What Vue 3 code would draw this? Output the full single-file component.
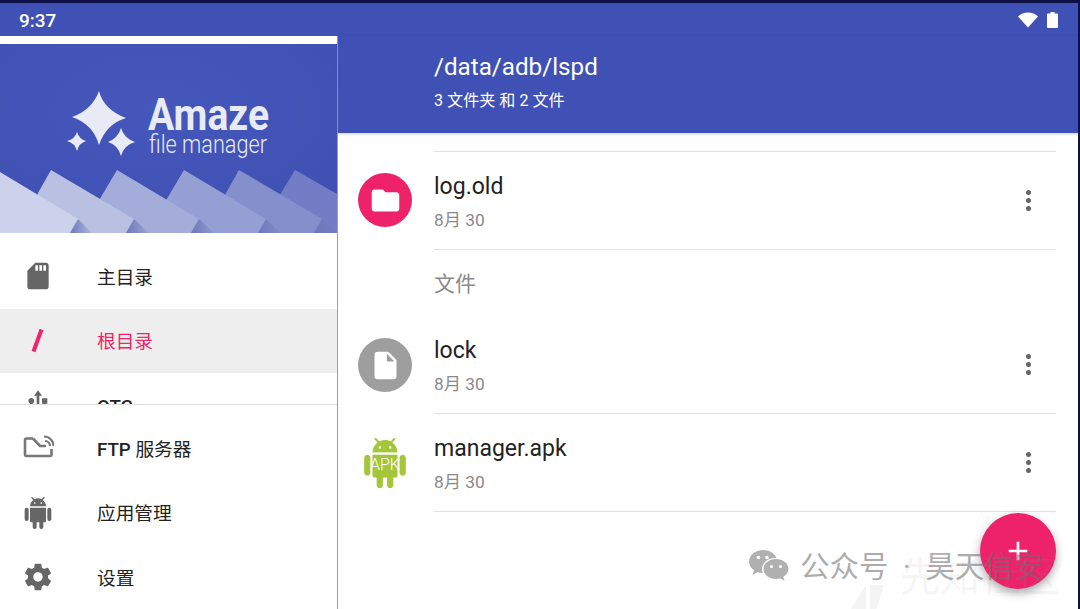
<script setup>
const sdPath = 'M18 2h-8L4.02 8 4 20c0 1.1.9 2 2 2h12c1.1 0 2-.9 2-2V4c0-1.1-.9-2-2-2zm-6 6h-2V4h2v4zm3 0h-2V4h2v4zm3 0h-2V4h2v4z'
const usbPath = 'M15 7v4h1v2h-3V5h2l-3-4-3 4h2v8H8v-2.07c.7-.37 1.2-1.08 1.2-1.93 0-1.21-.99-2.2-2.2-2.2-1.21 0-2.2.99-2.2 2.2 0 .85.5 1.56 1.2 1.93V13c0 1.11.89 2 2 2h3v3.05c-.71.37-1.2 1.1-1.2 1.95 0 1.22.99 2.2 2.2 2.2 1.21 0 2.2-.98 2.2-2.2 0-.85-.49-1.58-1.2-1.95V15h3c1.11 0 2-.89 2-2v-2h1V7h-4z'
const androidPath = 'M6 18c0 .55.45 1 1 1h1v3.5c0 .83.67 1.5 1.5 1.5s1.5-.67 1.5-1.5V19h2v3.5c0 .83.67 1.5 1.5 1.5s1.5-.67 1.5-1.5V19h1c.55 0 1-.45 1-1V8H6v10zM3.5 8C2.67 8 2 8.67 2 9.5v7c0 .83.67 1.5 1.5 1.5S5 17.33 5 16.5v-7C5 8.67 4.33 8 3.5 8zm17 0c-.83 0-1.5.67-1.5 1.5v7c0 .83.67 1.5 1.5 1.5s1.5-.67 1.5-1.5v-7c0-.83-.67-1.5-1.5-1.5zm-4.97-5.84l1.3-1.3c.2-.2.2-.51 0-.71-.2-.2-.51-.2-.71 0l-1.48 1.48C13.85 1.23 12.95 1 12 1c-.96 0-1.86.23-2.66.63L7.85.15c-.2-.2-.51-.2-.71 0-.2.2-.2.51 0 .71l1.31 1.31C6.97 3.26 6 5.01 6 7h12c0-1.99-.97-3.75-2.47-4.84zM10 5H9V4h1v1zm5 0h-1V4h1v1z'
const gearPath = 'M19.43 12.98c.04-.32.07-.64.07-.98s-.03-.66-.07-.98l2.11-1.65c.19-.15.24-.42.12-.64l-2-3.46c-.12-.22-.39-.3-.61-.22l-2.49 1c-.52-.4-1.08-.73-1.69-.98l-.38-2.65C14.46 2.18 14.25 2 14 2h-4c-.25 0-.46.18-.49.42l-.38 2.65c-.61.25-1.17.59-1.69.98l-2.49-1c-.23-.09-.49 0-.61.22l-2 3.46c-.13.22-.07.49.12.64l2.11 1.65c-.04.32-.07.65-.07.98s.03.66.07.98l-2.11 1.65c-.19.15-.24.42-.12.64l2 3.46c.12.22.39.3.61.22l2.49-1c.52.4 1.08.73 1.69.98l.38 2.65c.03.24.24.42.49.42h4c.25 0 .46-.18.49-.42l.38-2.65c.61-.25 1.17-.59 1.69-.98l2.49 1c.23.09.49 0 .61-.22l2-3.46c.12-.22.07-.49-.12-.64l-2.11-1.65zM12 15.5c-1.93 0-3.5-1.57-3.5-3.5s1.57-3.5 3.5-3.5 3.5 1.57 3.5 3.5-1.57 3.5-3.5 3.5z'
const folderPath = 'M10 4H4c-1.1 0-1.99.9-1.99 2L2 18c0 1.1.9 2 2 2h16c1.1 0 2-.9 2-2V8c0-1.1-.9-2-2-2h-8l-2-2z'
const filePath = 'M6 2c-1.1 0-1.99.9-1.99 2L4 20c0 1.1.89 2 1.99 2H18c1.1 0 2-.9 2-2V8l-6-6H6zm7 7V3.5L18.5 9H13z'

const peaks = [
  { points: '295,170 337,194 337,233 260,233 281,193', shade: '', fill: '#737dc5' },
  { points: '239,170 322,219 314,233 205,233 226,193', shade: '322,219 337,233 314,233', fill: '#858fcb' },
  { points: '184,170 266,219 258,233 145,233 168,197', shade: '266,219 281,233 258,233', fill: '#959fd3' },
  { points: '117,170 199,219 191,233 80,233 101,197', shade: '199,219 214,233 191,233', fill: '#a4acd9' },
  { points: '51,170 134,219 126,233 20,233 38,193', shade: '134,219 149,233 126,233', fill: '#b9c0e2' },
  { points: '0,172 78,219 70,233 0,233', shade: '78,219 92,233 70,233', fill: '#cdd2ec' },
]

const topMenu = [
  { label: '主目录', icon: sdPath },
  { label: '根目录', slash: true, active: true },
  { label: 'OTG', icon: usbPath, clipped: true },
]

const files = [
  { name: 'log.old', date: '8月 30', kind: 'folder' },
  { section: '文件' },
  { name: 'lock', date: '8月 30', kind: 'file' },
  { name: 'manager.apk', date: '8月 30', kind: 'apk' },
]
</script>

<template>
  <div class="screen">
    <div class="status-bar">
      <span class="clock">9:37</span>
      <div class="status-icons">
        <svg width="20" height="16" viewBox="0 0 20 16"><path d="M0 4.5C2.7 2 6.2.5 10 .5s7.300 1.500 10 4L10 15.500z" fill="#fff" /></svg>
        <svg width="11" height="16" viewBox="0 0 11 16">
          <path d="M3.500 0h4v1.500H10c.5 0 1 .4 1 1V15c0 .6-.5 1-1 1H1c-.6 0-1-.4-1-1V2.500c0-.6.4-1 1-1h2.500z" fill="#fff" />
        </svg>
      </div>
    </div>

    <div class="body">
      <aside class="drawer">
        <div class="drawer-gap"></div>
        <svg class="banner" width="337" height="189" viewBox="0 44 337 189">
          <defs>
            <radialGradient id="bannerBg" cx="45%" cy="35%" r="75%">
              <stop offset="0" stop-color="#4557bb" />
              <stop offset="1" stop-color="#3f50b2" />
            </radialGradient>
            <linearGradient id="shade" x1="0" y1="0" x2="1" y2="0">
              <stop offset="0" stop-color="#6f78ba" />
              <stop offset="1" stop-color="#6f78ba" stop-opacity="0.15" />
            </linearGradient>
          </defs>
          <rect x="0" y="44" width="337" height="189" fill="url(#bannerBg)" />
          <g v-for="peak in peaks" :key="peak.fill">
            <polygon :points="peak.points" :fill="peak.fill" />
            <polygon v-if="peak.shade" :points="peak.shade" fill="url(#shade)" />
          </g>
          <g fill="#e8eaf6">
            <path d="M99 91 Q104 110 126 118 Q106 124 99 145 Q93 124 72 117 Q92 110 99 91z" />
            <path d="M77 132 Q79 139 86 141 Q79 143 77 151 Q75 143 67 141 Q75 139 77 132z" />
            <path d="M121 128 Q124 138 135 142 Q124 145 121 156 Q118 145 108 142 Q118 138 121 128z" />
            <text x="148" y="130" class="logo-main" textLength="121" lengthAdjust="spacingAndGlyphs">Amaze</text>
            <text x="149" y="153" class="logo-sub" textLength="118" lengthAdjust="spacingAndGlyphs">file manager</text>
          </g>
        </svg>

        <nav class="menu-top">
          <div v-for="item in topMenu" :key="item.label" class="menu-row" :class="{ active: item.active }">
            <span class="menu-icon">
              <svg v-if="item.slash" width="32" height="32" viewBox="0 0 32 32">
                <path d="M19.500 4.500 L11.500 26.500" stroke="#f0246b" stroke-width="4" />
              </svg>
              <svg v-else width="32" height="32" viewBox="0 0 24 24"><path :d="item.icon" fill="#666" /></svg>
            </span>
            <span class="menu-label" :class="{ clipped: item.clipped }">{{ item.label }}</span>
          </div>
        </nav>

        <nav class="menu-bottom">
          <div class="menu-row">
            <span class="menu-icon">
              <svg width="32" height="32" viewBox="0 0 32 32" fill="none" stroke="#777">
                <path d="M11 6.500H4.500Q3 6.500 3 8V22.500Q3 24 4.500 24H28Q29.500 24 29.500 22.500V17" stroke-width="2.600" />
                <path d="M11 6.500l7 7.500H24" stroke-width="2.600" />
                <path d="M22 4.500a9.500 9.500 0 0 1 9.500 9.500M23 9a5 5 0 0 1 5 5" stroke-width="2.200" />
              </svg>
            </span>
            <span class="menu-label"><b>FTP</b> 服务器</span>
          </div>
          <div class="menu-row">
            <span class="menu-icon"><svg width="32" height="32" viewBox="0 0 24 24"><path :d="androidPath" fill="#666" /></svg></span>
            <span class="menu-label">应用管理</span>
          </div>
          <div class="menu-row">
            <span class="menu-icon"><svg width="32" height="32" viewBox="0 0 24 24"><path :d="gearPath" fill="#666" /></svg></span>
            <span class="menu-label">设置</span>
          </div>
        </nav>
      </aside>

      <main class="main">
        <header class="header">
          <div class="path">/data/adb/lspd</div>
          <div class="summary">3 文件夹 和 2 文件</div>
        </header>

        <div class="list">
          <div class="list-top"></div>
          <template v-for="row in files" :key="row.name || row.section">
            <div v-if="row.section" class="section">{{ row.section }}</div>
            <div v-else class="row">
              <div class="row-icon">
                <span v-if="row.kind === 'folder'" class="circle pink">
                  <svg width="33" height="33" viewBox="0 0 24 24"><path :d="folderPath" fill="#fff" /></svg>
                </span>
                <span v-else-if="row.kind === 'file'" class="circle grey">
                  <svg width="33" height="33" viewBox="0 0 24 24"><path :d="filePath" fill="#fff" /></svg>
                </span>
                <svg v-else width="50" height="50" viewBox="0 0 24 24">
                  <path :d="androidPath" fill="#a4c639" />
                  <rect x="6" y="7.100" width="12" height="0.500" fill="#fff" />
                  <text x="12" y="15.300" class="apk-text" text-anchor="middle">APK</text>
                </svg>
              </div>
              <div class="row-body">
                <div class="row-text">
                  <div class="row-name">{{ row.name }}</div>
                  <div class="row-date">{{ row.date }}</div>
                </div>
                <span class="more"><i></i><i></i><i></i></span>
              </div>
            </div>
          </template>
        </div>
      </main>
    </div>

    <button class="fab" type="button">
      <svg width="32" height="32" viewBox="0 0 24 24"><path d="M19 13h-6v6h-2v-6H5v-2h6V5h2v6h6v2z" fill="#fff" /></svg>
    </button>

    <div class="mark-faint">
      <svg width="44" height="36" viewBox="0 0 44 36"><path d="M4 36L24 4v32zM28 4h14L32 36h-4z" fill="#f4f4f4" /></svg>
      <span>先知社区</span>
    </div>

    <div class="mark">
      <svg width="40" height="36" viewBox="0 0 40 36" fill="#b0b0b0">
        <path d="M14 1C6.500 1 0 6 0 12.500c0 3.600 2 6.600 5 8.800L3.500 26l5.200-2.700c1.500.4 3.300.7 5 .7-.5-1.300-.7-2.600-.7-3.900C13 13.700 19 9 26.300 9c.4 0 .9 0 1.200.1C26 4.400 20.500 1 14 1z" />
        <path d="M39.500 20c0-5.600-5.600-10-12.500-10S14.500 14.400 14.500 20 20 30 27 30c1.400 0 2.900-.3 4.200-.7l4.300 2.400-1.200-3.900c3-2 5.200-4.800 5.200-7.800z" />
        <circle cx="9.500" cy="8.500" r="1.800" fill="#fff" /><circle cx="18" cy="8.500" r="1.800" fill="#fff" />
        <circle cx="22.500" cy="17.500" r="1.600" fill="#fff" /><circle cx="31.500" cy="17.500" r="1.600" fill="#fff" />
      </svg>
      <span class="mark-text">公众号<span class="mark-dot">·</span>昊天信安</span>
    </div>
  </div>
</template>

<style scoped>
.screen {
  position: relative;
  display: flex;
  flex-direction: column;

  width: 1080px;
  height: 609px;

  box-sizing: border-box;
  border-top: 3px solid #0e1145;
  border-right: 2px solid #0e1145;

  overflow: hidden;

  background: #fff;
  font-family: Roboto, "Noto Sans CJK SC", sans-serif;
}

.status-bar {
  display: flex;
  justify-content: space-between;
  align-items: center;
  flex: none;

  height: 33px;
  padding: 0 20px 0 19px;

  background: #3f51b5;
  color: #fff;
}

.clock {
  padding-top: 1px;
  font-size: 19px;
  font-weight: 500;
}

.status-icons {
  display: flex;
  align-items: center;
  gap: 9px;
}

.body {
  display: flex;
  flex: 1;
  min-height: 0;
}

.drawer {
  display: flex;
  flex-direction: column;
  flex: none;

  width: 337px;

  border-right: 1px solid #9e9e9e;

  background: #fff;
}

.drawer-gap {
  height: 8px;
  flex: none;
}

.banner {
  display: block;
  flex: none;
}

.logo-main {
  font-family: Roboto, sans-serif;
  font-size: 45px;
  font-weight: 700;
}

.logo-sub {
  font-family: Roboto, sans-serif;
  font-size: 25px;
  font-weight: 300;
}

.menu-top {
  flex: none;

  height: 172px;
  padding-top: 11px;
  box-sizing: border-box;

  overflow: hidden;

  border-bottom: 1px solid #e0e0e0;
}

.menu-bottom {
  padding-top: 11px;
}

.menu-row {
  display: flex;
  align-items: center;

  height: 64.500px;

  color: #222;
}

.menu-row.active {
  background: #eee;
  color: #f0246b;
}

.menu-icon {
  display: flex;
  justify-content: center;

  width: 32px;
  margin: 0 38px 0 22px;
}

.menu-label {
  margin-left: 5px;
  padding-bottom: 2px;
  font-size: 18.700px;
}

.menu-label.clipped {
  padding: 3px 0 0;
  font-weight: 500;
}

.menu-label b {
  font-weight: 500;
}

.main {
  display: flex;
  flex-direction: column;
  flex: 1;
  min-width: 0;
}

.header {
  flex: none;

  height: 97px;
  padding: 0 0 0 96px;
  box-sizing: border-box;

  background: #3f51b5;
  box-shadow: 0 1px 3px rgba(0, 0, 0, .2);
  color: #fff;
}

.path {
  padding-top: 16px;
  font-size: 24.200px;
  line-height: 30px;
}

.summary {
  margin-top: 9px;
  font-size: 16.100px;
  line-height: 20px;
}

.list {
  padding-top: 18px;
}

.list-top {
  width: 622px;
  margin-left: 96px;

  border-top: 1px solid #e0e0e0;
}

.row {
  display: flex;
  height: 98px;
  padding-left: 20px;
}

.row-icon {
  display: flex;
  justify-content: center;
  align-items: center;
  flex: none;

  width: 54px;
  margin-right: 22px;
}

.circle {
  display: flex;
  justify-content: center;
  align-items: center;

  width: 54px;
  height: 54px;

  border-radius: 50%;
}

.pink {
  margin-bottom: 2px;
  background: #ee2268;
}

.grey {
  background: #9e9e9e;
}

.row-body {
  display: flex;
  justify-content: space-between;
  align-items: center;
  flex: 1;

  width: 622px;
  max-width: 622px;

  border-bottom: 1px solid #e0e0e0;
}

.row-text {
  padding-top: 2px;
}

.row-name {
  font-size: 23px;
  line-height: 28px;
  color: #222;
}

.row-date {
  margin-top: 9px;
  font-size: 17.300px;
  line-height: 21px;
  color: #8a8a8a;
}

.more {
  display: flex;
  flex-direction: column;
  align-items: center;
  gap: 3px;

  margin-right: 25px;
}

.more i {
  width: 5px;
  height: 5px;

  border-radius: 50%;

  background: #666;
}

.section {
  display: flex;
  align-items: center;

  height: 63px;
  padding-bottom: 3px;

  padding-left: 96px;

  font-size: 21px;
  color: #8a8a8a;
}

.apk-text {
  font-family: Roboto, sans-serif;
  font-size: 7.700px;
  font-weight: 300;
  fill: #fff;
}

.fab {
  position: absolute;
  left: 980px;
  top: 510px;

  display: flex;
  justify-content: center;
  align-items: center;

  width: 76px;
  height: 76px;
  padding: 0;

  border: none;
  border-radius: 50%;

  background: #ee2268;
  box-shadow: 0 4px 10px rgba(0, 0, 0, .35);
}

.mark {
  position: absolute;
  left: 749px;
  top: 544px;

  display: flex;
  align-items: center;
  gap: 11px;

  font-size: 29.500px;
  line-height: 40px;
  white-space: nowrap;
  color: rgba(110, 110, 110, .58);
}

.mark-dot {
  margin: 0 14.500px;
}

.mark-faint {
  position: absolute;
  left: 842px;
  top: 552px;

  display: flex;
  align-items: flex-start;
  gap: 14px;

  font-size: 40px;
  line-height: 46px;
  white-space: nowrap;
  color: rgba(150, 150, 150, .1);
}

.mark-faint svg {
  margin-top: 26px;
}
</style>
